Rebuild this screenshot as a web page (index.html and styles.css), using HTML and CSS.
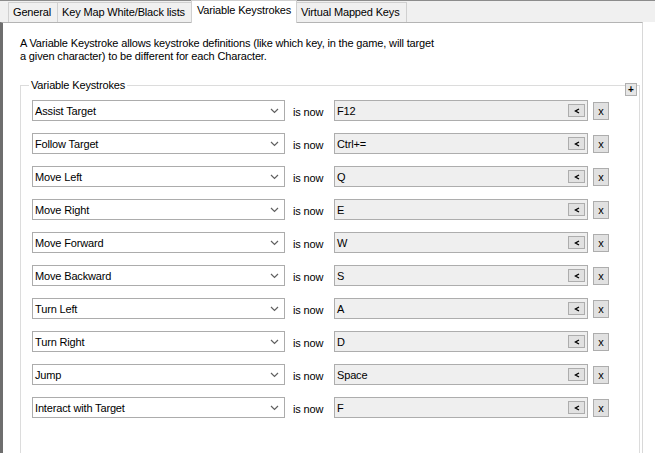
FILE: index.html
```html
<!DOCTYPE html>
<html lang="en">
<head>
    <meta charset="UTF-8">
    <title>Variable Keystrokes</title>
    <link rel="stylesheet" href="styles.css">
</head>
<body>
    <div class="window">
        <div class="tabstrip">
            <div class="tab">General</div>
            <div class="tab">Key Map White/Black lists</div>
            <div class="tab active">Variable Keystrokes</div>
            <div class="tab">Virtual Mapped Keys</div>
        </div>
        <div class="page">
            <p class="intro">A Variable Keystroke allows keystroke definitions (like which key, in the game, will target<br>a given character) to be different for each Character.</p>
            <fieldset class="group">
                <legend>Variable Keystrokes</legend>
                <button class="add">+</button>
                <div class="rows" id="rows"></div>
            </fieldset>
        </div>
    </div>

    <script>
        const keystrokes = [
            ['Assist Target', 'F12'],
            ['Follow Target', 'Ctrl+='],
            ['Move Left', 'Q'],
            ['Move Right', 'E'],
            ['Move Forward', 'W'],
            ['Move Backward', 'S'],
            ['Turn Left', 'A'],
            ['Turn Right', 'D'],
            ['Jump', 'Space'],
            ['Interact with Target', 'F']
        ];

        const rows = document.getElementById('rows');
        keystrokes.forEach(function (k) {
            const row = document.createElement('div');
            row.className = 'row';
            row.innerHTML =
                '<div class="combo"><span>' + k[0] + '</span>' +
                '<svg width="9" height="6" viewBox="0 0 9 6"><polyline points="1,1 4.5,4.5 8,1" fill="none" stroke="#606060" stroke-width="1.2"/></svg></div>' +
                '<span class="is-now">is now</span>' +
                '<div class="keybox"><span>' + k[1] + '</span>' +
                '<span class="back"><svg width="6" height="6" viewBox="0 0 6 6"><polyline points="5,1 1.5,3 5,5" fill="none" stroke="#000" stroke-width="1.4"/></svg></span></div>' +
                '<span class="remove">x</span>';
            rows.appendChild(row);
        });
    </script>
</body>
</html>
```

FILE: styles.css
```css
body {
    margin: 0;
    background-color: white;
    font-family: "Liberation Sans", Arial, sans-serif;
    font-size: 11px;
    letter-spacing: -0.15px;
    color: black;
    overflow: hidden;
}
.window {
    width: 655px;
    height: 453px;
    overflow: hidden;
}
.tabstrip {
    height: 21px;
    background-color: #f0f0f0;
    border-top: 1px solid #8c8c8c;
    display: flex;
    align-items: flex-end;
    padding-left: 8px;
}
.tab {
    height: 19px;
    line-height: 18px;
    padding: 0 6px 0 4px;
    border: 1px solid #d0d0d0;
    border-bottom: none;
    margin-right: -1px;
    background-color: #f0f0f0;
}
.tab.active {
    height: 22px;
    line-height: 18px;
    margin-bottom: -1px;
    padding: 0 5px 0 5px;
    background-color: white;
    position: relative;
}
.page {
    height: 430px;
    width: 639px;
    border-top: 1px solid #b4b4b4;
    border-left: 3px solid #6e6e6e;
    border-right: 1px solid #d8d8d8;
    background-color: white;
}
.intro {
    margin: 14px 0 0 17px;
    line-height: 13px;
}
.group {
    position: relative;
    margin: 16px 0 0 17px;
    padding: 8px 0 0 11px;
    width: 607px;
    height: 420px;
    border: 1px solid #dcdcdc;
    border-radius: 0;
}
.group legend {
    padding: 0 2px;
    margin-left: -3px;
    line-height: 13px;
}
.add {
    position: absolute;
    top: -9px;
    right: 2px;
    width: 12px;
    height: 13px;
    padding: 0;
    border: 1px solid #b0b0b0;
    background-color: #e6e6e6;
    font-family: "Liberation Sans", Arial, sans-serif;
    font-size: 10px;
    font-weight: bold;
    line-height: 10px;
}
.rows {
    display: flex;
    flex-direction: column;
    gap: 12px;
}
.row {
    display: flex;
    align-items: center;
    height: 21px;
}
.combo {
    height: 19px;
    border: 1px solid #acacac;
    display: flex;
    align-items: center;
    justify-content: space-between;
    padding: 0 5px 0 2px;
    width: 244px;
}
.is-now {
    margin-left: 8px;
    width: 41px;
    padding-top: 2px;
}
.keybox {
    width: 248px;
    height: 19px;
    border: 1px solid #adadad;
    background-color: #efefef;
    display: flex;
    align-items: center;
    justify-content: space-between;
    padding: 0 2px 0 2px;
}
.back {
    width: 15px;
    height: 11px;
    border: 1px solid #adadad;
    background-color: #e1e1e1;
    display: flex;
    align-items: center;
    justify-content: center;
}
.remove {
    margin-left: 5px;
    width: 14px;
    height: 16px;
    border: 1px solid #adadad;
    background-color: #e1e1e1;
    text-align: center;
    line-height: 16px;
    font-size: 11px;
}
```
